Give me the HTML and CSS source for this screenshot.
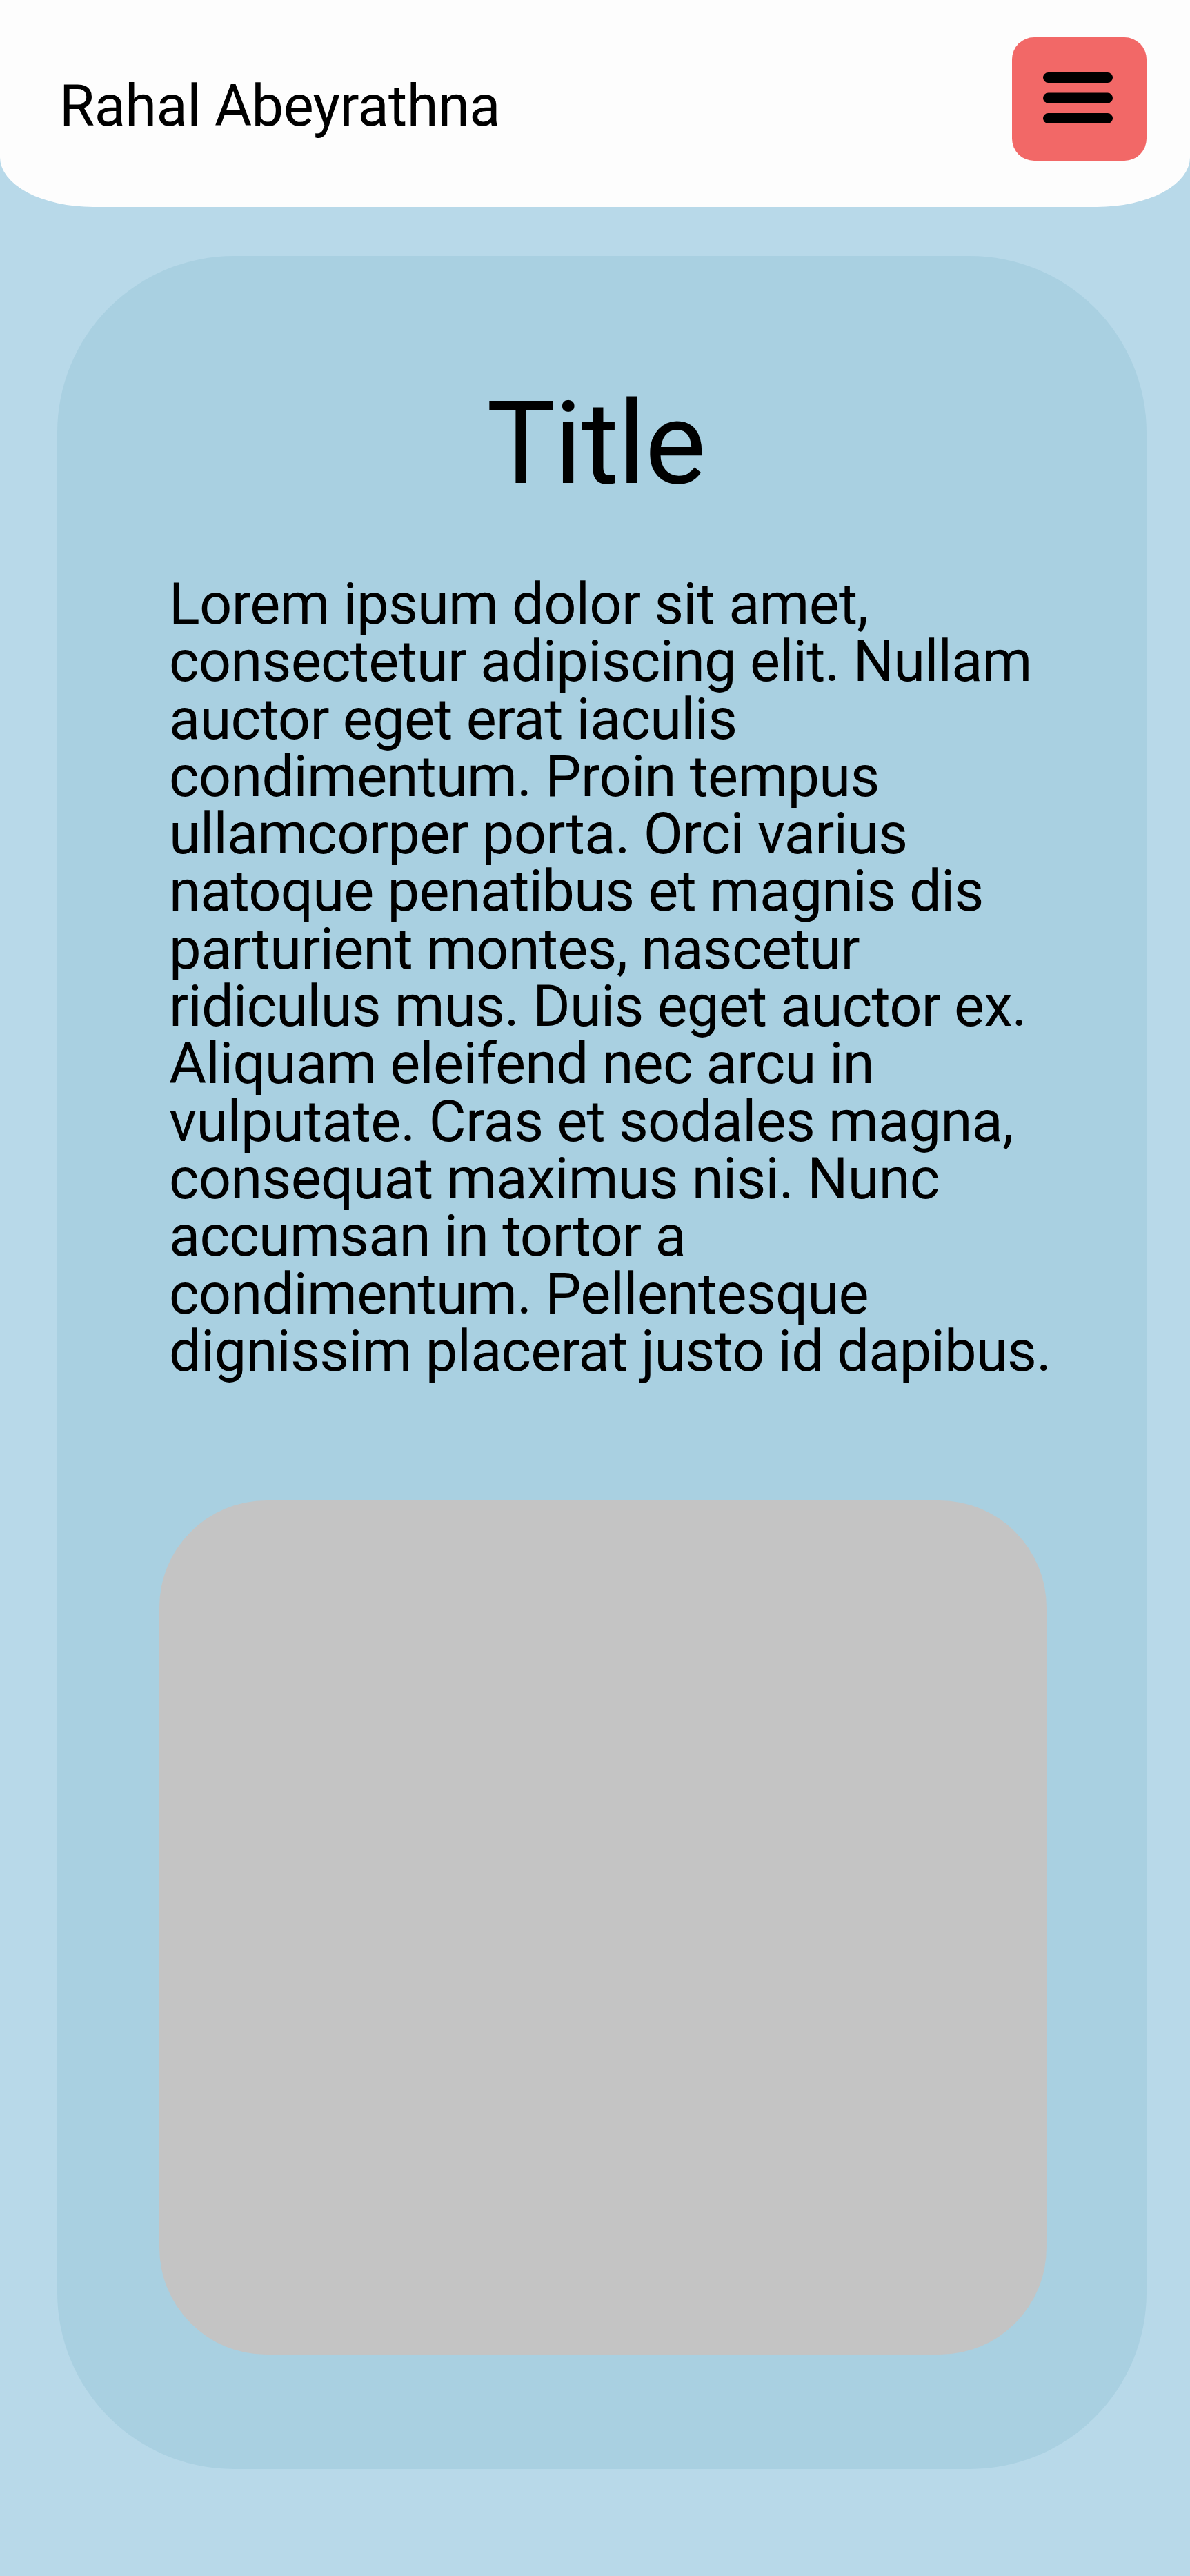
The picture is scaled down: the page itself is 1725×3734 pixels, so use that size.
FILE: index.html
```html
<!DOCTYPE html>
<html lang="en">
<head>
<meta charset="utf-8">
<title>Rahal Abeyrathna</title>
<link rel="stylesheet" href="styles.css">
</head>
<body>
<header class="topbar">
  <div class="brand">Rahal Abeyrathna</div>
  <button class="menu-btn" aria-label="Menu">
    <svg class="menu-icon" width="101" height="74" viewBox="0 0 101 74">
      <line x1="7.5" y1="7.5" x2="93.5" y2="7.5" />
      <line x1="7.5" y1="37" x2="93.5" y2="37" />
      <line x1="7.5" y1="66.5" x2="93.5" y2="66.5" />
    </svg>
  </button>
</header>
<main class="content">
  <section class="card">
    <h1 class="card-title">Title</h1>
    <p class="card-text">Lorem ipsum dolor sit amet, consectetur adipiscing elit. Nullam auctor eget erat iaculis condimentum. Proin tempus ullamcorper porta. Orci varius natoque penatibus et magnis dis parturient montes, nascetur ridiculus mus. Duis eget auctor ex. Aliquam eleifend nec arcu in vulputate. Cras et sodales magna, consequat maximus nisi. Nunc accumsan in tortor a condimentum. Pellentesque dignissim placerat justo id dapibus.</p>
    <div class="card-image"></div>
  </section>
</main>
</body>
</html>
```

FILE: styles.css
```css
* {
  box-sizing: border-box;
}

html, body {
  margin: 0;
  padding: 0;
}

body {
  background: #b8d9e9;
  font-family: Roboto, "Liberation Sans", Arial, sans-serif;
  color: #000;
  min-height: 3734px;
}

.topbar {
  height: 300px;
  background: #fdfdfd;
  border-bottom-left-radius: 135px 72px;
  border-bottom-right-radius: 135px 72px;
  display: flex;
  justify-content: space-between;
  align-items: flex-start;
  padding: 0 63px 0 86px;
}

.brand {
  font-size: 83px;
  letter-spacing: -0.006em;
  line-height: 300px;
  height: 300px;
  white-space: nowrap;
  padding-top: 4px;
}

.menu-btn {
  margin-top: 54px;
  width: 195px;
  height: 179px;
  border: none;
  border-radius: 32px;
  background: #f26867;
  padding: 0;
  display: flex;
  align-items: center;
  justify-content: center;
  cursor: pointer;
}

.menu-icon {
  display: block;
  margin-left: -4px;
  margin-top: -3px;
}

.menu-icon line {
  stroke: #000;
  stroke-width: 15;
  stroke-linecap: round;
}

.content {
  padding: 71px 0 155px 83px;
}

.card {
  width: 1579px;
  height: 3208px;
  background: #a9d0e1;
  border-radius: 256px;
  padding: 174px 0 0 0;
  display: flex;
  flex-direction: column;
}

.card-title {
  margin: 0;
  font-weight: 400;
  font-size: 167px;
  letter-spacing: -0.009em;
  line-height: 196px;
  text-align: center;
  padding-right: 18px;
}

.card-text {
  margin: 93px 0 0 162px;
  width: 1282px;
  font-size: 83px;
  letter-spacing: -0.0085em;
  line-height: 83.3px;
}

.card-image {
  margin: 175px 0 0 148px;
  width: 1286px;
  height: 1238px;
  background: #c4c4c4;
  border-radius: 155px;
}
```
